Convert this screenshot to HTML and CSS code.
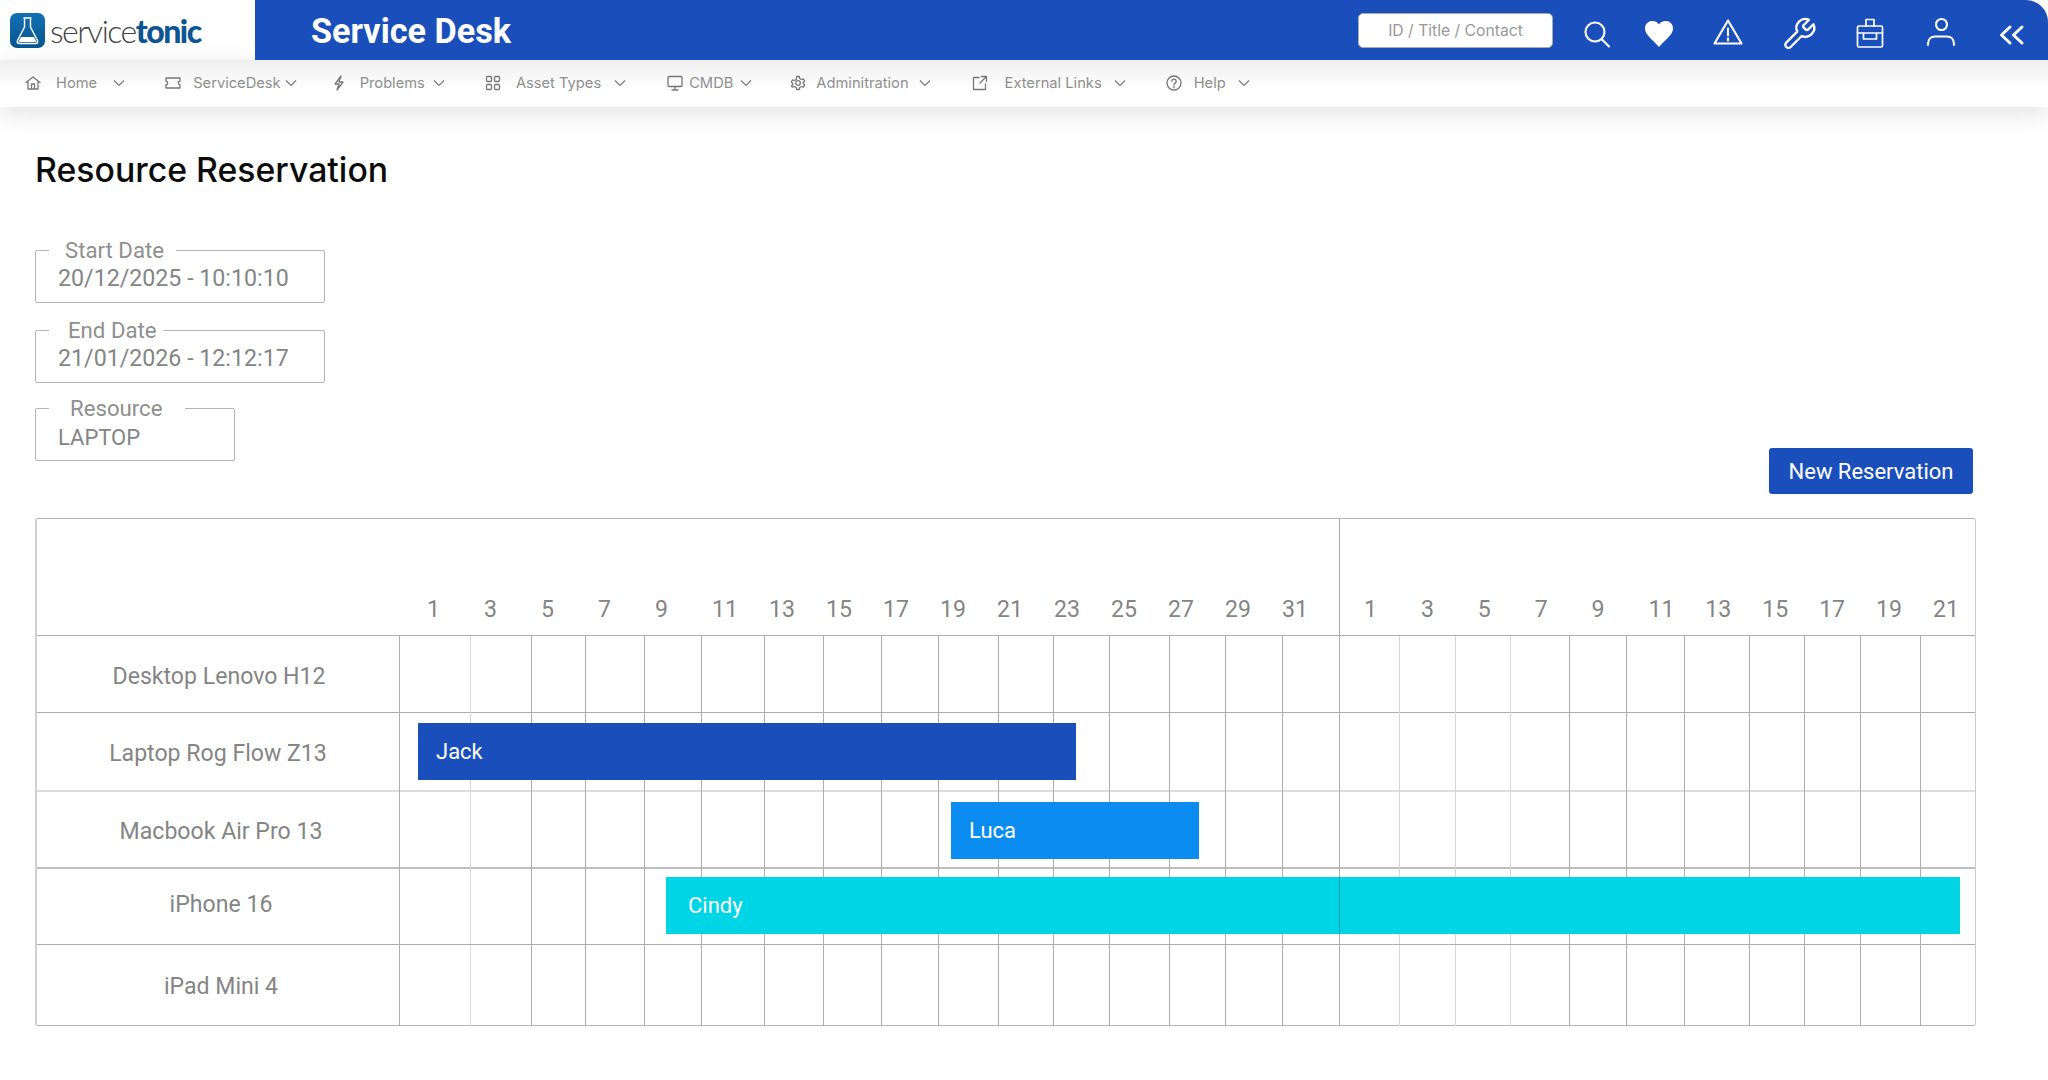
FILE: index.html
```html
<!DOCTYPE html>
<html lang="en">
<head>
    <meta charset="UTF-8">
    <meta name="viewport" content="width=device-width, initial-scale=1.0">
    <title>Resource Reservation</title>
    <link rel="stylesheet" href="styles.css">
</head>
<body>

    <header class="topbar">
        <div class="logo">
            <svg class="logo-icon" viewBox="0 0 35 35">
                <defs>
                    <linearGradient id="logo-blue" x1="0" y1="0" x2="0" y2="1">
                        <stop offset="0" stop-color="#1270b4"/>
                        <stop offset="1" stop-color="#06568f"/>
                    </linearGradient>
                </defs>
                <rect width="35" height="35" rx="7" fill="url(#logo-blue)"/>
                <path d="M13.500 5h8M14.500 5v9L7.500 27.500Q6.500 30.500 9.500 30.500h16q3 0 2-3L20.500 14V5" fill="none" stroke="#fff" stroke-width="1.400"/>
                <path d="M11 24h13l2.500 5h-18z" fill="#fff"/>
            </svg>
            <span class="logo-text"><span class="logo-light">service</span><span class="logo-bold">tonic</span></span>
        </div>
        <div class="topbar-main">
            <div class="app-title">Service Desk</div>
            <div class="search-box">ID / Title / Contact</div>
            <div class="top-icons">
                <svg class="top-icon ic-search" viewBox="0 0 30 30"><circle cx="14" cy="14" r="9.500"/><path d="M21 21.500l7 7"/></svg>
                <svg class="top-icon ic-heart" viewBox="0 0 30 30"><path class="solid" d="M15 29C9 22 1 17 1 10.500 1 5.500 4.500 3 8.500 3c2.900 0 5.300 1.500 6.500 3.500C16.200 4.500 18.600 3 21.500 3 25.500 3 29 5.500 29 10.500 29 17 21 22 15 29z"/></svg>
                <svg class="top-icon ic-warn" viewBox="0 0 30 30"><path d="M15 2.500L28.500 25.500H1.500z"/><path d="M15 10.500v7M15 20.500v2"/></svg>
                <svg class="top-icon ic-wrench" viewBox="1 1 27 27"><path d="M19.500 7.500a1.300 1.300 0 0 0 0 1.900l2.100 2.100a1.300 1.300 0 0 0 1.900 0l4.900-4.900a8 8 0 0 1-10.600 10.600l-9.900 9.900a2.800 2.800 0 0 1-4-4l9.900-9.900A8 8 0 0 1 24.400 2.600z"/></svg>
                <svg class="top-icon ic-case" viewBox="0 0 30 30"><rect x="2.500" y="8" width="25" height="21" rx="1.500"/><path d="M11 8V1.500h8V8M2.500 15h25M8.500 15v6h13v-6"/></svg>
                <svg class="top-icon ic-user" viewBox="0 0 30 30"><circle cx="15.500" cy="6.500" r="5.500"/><path d="M2 27v-1c0-5 3-7.500 7-7.500h12c4 0 7 2.500 7 7.500v1"/></svg>
                <svg class="top-icon ic-back" viewBox="0 0 30 30"><path d="M14 9l-8.500 8 8.500 8M26 9l-8.500 8 8.500 8"/></svg>
            </div>
        </div>
    </header>

    <nav class="menu">
        <a class="menu-item home">
            <svg class="menu-icon" viewBox="0 0 16 16"><path d="M1 7.500L8 2l7 5.500M3 6.500V14h10V6.500M6.500 14V9h3v5"/></svg>
            <span class="menu-text">Home</span>
            <svg class="caret" viewBox="0 0 12 8"><path d="M1 1.500l5 5 5-5"/></svg>
        </a>
        <a class="menu-item desk">
            <svg class="menu-icon" viewBox="0 0 16 16"><path d="M1 3h14v3.300a1.700 1.700 0 0 0 0 3.400V13H1V9.700a1.700 1.700 0 0 0 0-3.400z"/></svg>
            <span class="menu-text">ServiceDesk</span>
            <svg class="caret" viewBox="0 0 12 8"><path d="M1 1.500l5 5 5-5"/></svg>
        </a>
        <a class="menu-item problems">
            <svg class="menu-icon" viewBox="0 0 16 16"><path d="M10 1L4 9h4l-2 6 6-8H8z"/></svg>
            <span class="menu-text">Problems</span>
            <svg class="caret" viewBox="0 0 12 8"><path d="M1 1.500l5 5 5-5"/></svg>
        </a>
        <a class="menu-item assets">
            <svg class="menu-icon" viewBox="0 0 16 16"><rect x="1.500" y="1.500" width="5" height="5" rx="1"/><rect x="9.500" y="1.500" width="5" height="5" rx="1"/><rect x="1.500" y="9.500" width="5" height="5" rx="1"/><rect x="9.500" y="9.500" width="5" height="5" rx="1"/></svg>
            <span class="menu-text">Asset Types</span>
            <svg class="caret" viewBox="0 0 12 8"><path d="M1 1.500l5 5 5-5"/></svg>
        </a>
        <a class="menu-item cmdb">
            <svg class="menu-icon" viewBox="0 0 16 16"><rect x="1" y="1.500" width="14" height="10" rx="1"/><path d="M8 11.500V15M5 15h6"/></svg>
            <span class="menu-text">CMDB</span>
            <svg class="caret" viewBox="0 0 12 8"><path d="M1 1.500l5 5 5-5"/></svg>
        </a>
        <a class="menu-item admin">
            <svg class="menu-icon" viewBox="0 0 16 16"><circle cx="8" cy="8" r="2.300"/><path d="M6.700 1.500h2.600l.4 2 1.700 1 2-.7 1.300 2.300-1.500 1.300v1.200l1.500 1.300-1.300 2.300-2-.7-1.700 1-.4 2H6.700l-.4-2-1.700-1-2 .7L1.300 10.900l1.500-1.300V8.400L1.300 7.100l1.300-2.300 2 .7 1.700-1z"/></svg>
            <span class="menu-text">Adminitration</span>
            <svg class="caret" viewBox="0 0 12 8"><path d="M1 1.500l5 5 5-5"/></svg>
        </a>
        <a class="menu-item links">
            <svg class="menu-icon" viewBox="0 0 16 16"><path d="M7 2.500H1.500v12h12V9M9.500 1.500h5v5M14.500 1.500L8 8"/></svg>
            <span class="menu-text">External Links</span>
            <svg class="caret" viewBox="0 0 12 8"><path d="M1 1.500l5 5 5-5"/></svg>
        </a>
        <a class="menu-item help">
            <svg class="menu-icon" viewBox="0 0 16 16"><circle cx="8" cy="8" r="7"/><path d="M5.800 6.200a2.200 2.200 0 1 1 3.400 1.900C8.400 8.600 8 9 8 10M8 11.500v1.200"/></svg>
            <span class="menu-text">Help</span>
            <svg class="caret" viewBox="0 0 12 8"><path d="M1 1.500l5 5 5-5"/></svg>
        </a>
    </nav>

    <main class="content">
        <h1>Resource Reservation</h1>

        <div class="toolbar">
            <div class="filters">
                <fieldset class="field field-wide legend-start">
                    <legend>Start Date</legend>
                    <div class="field-value">20/12/2025 - 10:10:10</div>
                </fieldset>
                <fieldset class="field field-wide legend-end">
                    <legend>End Date</legend>
                    <div class="field-value">21/01/2026 - 12:12:17</div>
                </fieldset>
                <fieldset class="field field-narrow legend-resource">
                    <legend>Resource</legend>
                    <div class="field-value low">LAPTOP</div>
                </fieldset>
            </div>
            <button class="btn-new">New Reservation</button>
        </div>

        <div class="chart">
            <div class="chart-head">
                <div class="head-label"></div>
                <div class="month first">
                    <span>1</span><span>3</span><span>5</span><span>7</span><span>9</span><span>11</span><span>13</span><span>15</span><span>17</span><span>19</span><span>21</span><span>23</span><span>25</span><span>27</span><span>29</span><span>31</span>
                </div>
                <div class="month second">
                    <span>1</span><span>3</span><span>5</span><span>7</span><span>9</span><span>11</span><span>13</span><span>15</span><span>17</span><span>19</span><span>21</span>
                </div>
            </div>

            <div class="chart-row row-desktop">
                <div class="row-label">Desktop Lenovo H12</div>
                <i></i><i></i><i></i><i></i><i></i><i></i><i></i><i></i><i></i><i></i><i></i><i></i><i></i><i></i><i></i><i></i><i></i><i></i><i></i><i></i><i></i><i></i><i></i><i></i><i></i><i></i><i></i>
            </div>
            <div class="chart-row row-laptop">
                <div class="row-label">Laptop Rog Flow Z13</div>
                <i></i><i></i><i></i><i></i><i></i><i></i><i></i><i></i><i></i><i></i><i></i><i></i><i></i><i></i><i></i><i></i><i></i><i></i><i></i><i></i><i></i><i></i><i></i><i></i><i></i><i></i><i></i>
            </div>
            <div class="chart-row row-macbook">
                <div class="row-label">Macbook Air Pro 13</div>
                <i></i><i></i><i></i><i></i><i></i><i></i><i></i><i></i><i></i><i></i><i></i><i></i><i></i><i></i><i></i><i></i><i></i><i></i><i></i><i></i><i></i><i></i><i></i><i></i><i></i><i></i><i></i>
            </div>
            <div class="chart-row row-iphone">
                <div class="row-label">iPhone 16</div>
                <i></i><i></i><i></i><i></i><i></i><i></i><i></i><i></i><i></i><i></i><i></i><i></i><i></i><i></i><i></i><i></i><i></i><i></i><i></i><i></i><i></i><i></i><i></i><i></i><i></i><i></i><i></i>
            </div>
            <div class="chart-row row-ipad">
                <div class="row-label">iPad Mini 4</div>
                <i></i><i></i><i></i><i></i><i></i><i></i><i></i><i></i><i></i><i></i><i></i><i></i><i></i><i></i><i></i><i></i><i></i><i></i><i></i><i></i><i></i><i></i><i></i><i></i><i></i><i></i><i></i>
            </div>

            <div class="bar bar-jack">Jack</div>
            <div class="bar bar-luca">Luca</div>
            <div class="bar bar-cindy">Cindy</div>
        </div>
    </main>

</body>
</html>
```
FILE: styles.css
```css
body {
    margin: 0;
    background-color: #fff;
    font-family: 'Roboto', sans-serif;
    color: #858585;
}

/* top bar */
.topbar {
    display: flex;
    height: 60px;
}
.logo {
    width: 255px;
    flex: none;
    display: flex;
    align-items: center;
    padding-left: 10px;
    box-sizing: border-box;
    gap: 5px;
}
.logo-icon {
    width: 35px;
    height: 35px;
    flex: none;
}
.logo-text {
    font-family: 'Lato', sans-serif;
    font-size: 32px;
    letter-spacing: -1.5px;
    line-height: 35px;
}
.logo-light {
    font-weight: 300;
    color: #444;
}
.logo-bold {
    font-weight: 900;
    color: #0b5592;
}
.topbar-main {
    flex: 1;
    display: flex;
    align-items: center;
    background-color: #1a4fbb;
    border-top-right-radius: 22px;
    padding-left: 56px;
}
.app-title {
    font-size: 34.2px;
    font-weight: 700;
    color: #fff;
    flex: 1;
    padding-top: 2px;
}
.search-box {
    width: 195px;
    height: 35px;
    box-sizing: border-box;
    background-color: #fff;
    border: 1px solid #a9a9a9;
    border-radius: 5px;
    text-align: center;
    font-family: 'Inter', sans-serif;
    font-size: 15.7px;
    line-height: 33px;
    color: #999;
    margin-top: 1px;
}
.top-icons {
    display: flex;
    gap: 40px;
    margin-left: 28px;
    margin-right: 22px;
    margin-top: 6px;
}
.top-icon {
    width: 30px;
    height: 30px;
    overflow: visible;
    fill: none;
    stroke: #fff;
    stroke-width: 2.1;
    stroke-linejoin: round;
    stroke-linecap: round;
}
.top-icon .solid {
    fill: #fff;
    stroke: none;
}
.ic-heart { margin-left: -7px; }
.ic-warn { margin-left: -1px; }
.ic-case { margin-left: 2px; stroke-width: 1.7; }
.ic-user { margin-left: 1px; }
.ic-back { stroke-width: 3; }

/* menu */
.menu {
    display: flex;
    align-items: center;
    height: 47px;
    box-sizing: border-box;
    padding: 0 0 2px 25px;
    background: linear-gradient(#eeeeee, #ffffff 60%);
    box-shadow: 0 6px 24px rgba(0, 0, 0, 0.12);
    font-family: 'Inter', sans-serif;
    font-size: 14.7px;
    color: #8f8f8f;
}
.menu-item {
    display: flex;
    align-items: center;
}
.menu-icon {
    width: 16px;
    height: 16px;
    flex: none;
    fill: none;
    stroke: #777;
    stroke-width: 1.3;
    stroke-linejoin: round;
    stroke-linecap: round;
}
.caret {
    width: 12px;
    height: 8px;
    flex: none;
    fill: none;
    stroke: #777;
    stroke-width: 1.1;
}
.home .menu-text { margin: 0 16px 0 15px; }
.desk { margin-left: 40px; }
.desk .menu-text { margin: 0 4px 0 12px; }
.problems { margin-left: 34px; }
.problems .menu-text { margin: 0 8px 0 13px; }
.assets { margin-left: 40px; }
.assets .menu-text { margin: 0 13px 0 15px; }
.cmdb { margin-left: 41px; }
.cmdb .menu-text { margin: 0 7px 0 6px; }
.admin { margin-left: 38px; }
.admin .menu-text { margin: 0 10px 0 10px; }
.links { margin-left: 41px; }
.links .menu-text { margin: 0 12px 0 17px; }
.help { margin-left: 40px; }
.help .menu-text { margin: 0 12px 0 12px; }

/* content */
.content {
    padding: 0 35px;
}
h1 {
    margin: 42px 0 0;
    font-family: 'Inter', sans-serif;
    font-size: 33.8px;
    font-weight: 500;
    line-height: 42px;
    color: #0c0c0c;
}
.toolbar {
    display: flex;
    justify-content: space-between;
    align-items: flex-end;
    width: 1938px;
    margin-top: 46px;
}
.filters {
    padding-bottom: 33px;
}
.field {
    margin: 0;
    padding: 0 0 0 22px;
    box-sizing: border-box;
    height: 66px;
    border: 1px solid #b5b5b5;
    border-radius: 2px;
    min-width: 0;
}
.field-wide { width: 290px; }
.field-narrow { width: 200px; }
.legend-end { margin-top: 14px; }
.legend-resource { margin-top: 12px; }
.field legend {
    font-size: 22.2px;
    line-height: 26px;
    color: #8f8f8f;
    margin-left: -9px;
}
.legend-start legend { padding: 0 12px 0 16px; }
.legend-end legend { padding: 0 6px 0 19px; }
.legend-resource legend { padding: 0 23px 0 21px; }
.field-value {
    font-size: 23.2px;
    line-height: 28px;
    margin-top: 1px;
    color: #858585;
}
.field-value.low {
    margin-top: 3px;
    font-size: 22px;
}
.btn-new {
    width: 204px;
    height: 46px;
    border: none;
    border-radius: 3px;
    background-color: #1a4fbb;
    color: #fff;
    font-family: 'Roboto', sans-serif;
    font-size: 22px;
    padding: 0;
}

/* chart */
.chart {
    position: relative;
    width: 1941px;
    margin-top: 24px;
    box-sizing: border-box;
    border: 1px solid #b5b5b5;
    border-left: 2px solid #d0d0d0;
    border-right-color: #ccc;
    border-radius: 3px;
    font-size: 23.1px;
}
.chart-head {
    display: grid;
    grid-template-columns: 362px 940px 1fr;
    height: 116px;
}
.month {
    display: grid;
    align-items: end;
    padding-bottom: 11px;
    line-height: 28px;
}
.month.first {
    grid-template-columns: repeat(16, 57px);
    padding-left: 28px;
}
.month.second {
    grid-template-columns: repeat(11, 56.9px);
    padding-left: 24px;
    border-left: 1px solid #a8a8a8;
}
.chart-row {
    display: grid;
    grid-template-columns: 362px 71px 61px 54px 59px 57px 63px 59px 58px 57px 60px 55px 56px 60px 56px 57px 57px 60px 56px 55px 59px 57px 58px 65px 55px 56px 60px 55px;
    height: 77px;
    box-sizing: border-box;
    border-top: 1px solid #aeaeae;
}
.chart-row i {
    border-left: 1px solid #aeaeae;
}
.chart-row i:nth-of-type(2),
.chart-row i:nth-of-type(18),
.chart-row i:nth-of-type(19),
.chart-row i:nth-of-type(20) {
    border-left-color: #d6d6d6;
}
.row-label {
    text-align: center;
    line-height: 76px;
}
.row-laptop { height: 78px; }
.row-macbook { border-top: 2px solid #ddd; }
.row-iphone { border-top: 2px solid #bdbdbd; }
.row-ipad { height: 81px; }
.row-desktop .row-label { padding: 3px 0 0 2px; }
.row-laptop .row-label { padding-top: 3px; }
.row-macbook .row-label { padding: 2px 0 0 6px; }
.row-iphone .row-label { padding-left: 6px; line-height: 72px; }
.row-ipad .row-label { padding: 2px 0 0 6px; line-height: 80px; }
.bar {
    position: absolute;
    height: 57px;
    line-height: 57px;
    color: #fff;
    font-size: 22px;
    box-sizing: border-box;
}
.bar-jack {
    left: 381px;
    top: 204px;
    width: 658px;
    padding-left: 18px;
    background-color: #1a4fbb;
}
.bar-luca {
    left: 914px;
    top: 283px;
    width: 248px;
    padding-left: 18px;
    background-color: #0a8cf0;
}
.bar-cindy {
    left: 629px;
    top: 358px;
    width: 1294px;
    padding-left: 22px;
    background-color: #00d5e5;
}
/* month divider shows through the long bar */
.bar-cindy::after {
    content: '';
    position: absolute;
    left: 673px;
    top: 0;
    bottom: 0;
    width: 1px;
    background-color: rgba(0, 0, 0, 0.25);
}
```
